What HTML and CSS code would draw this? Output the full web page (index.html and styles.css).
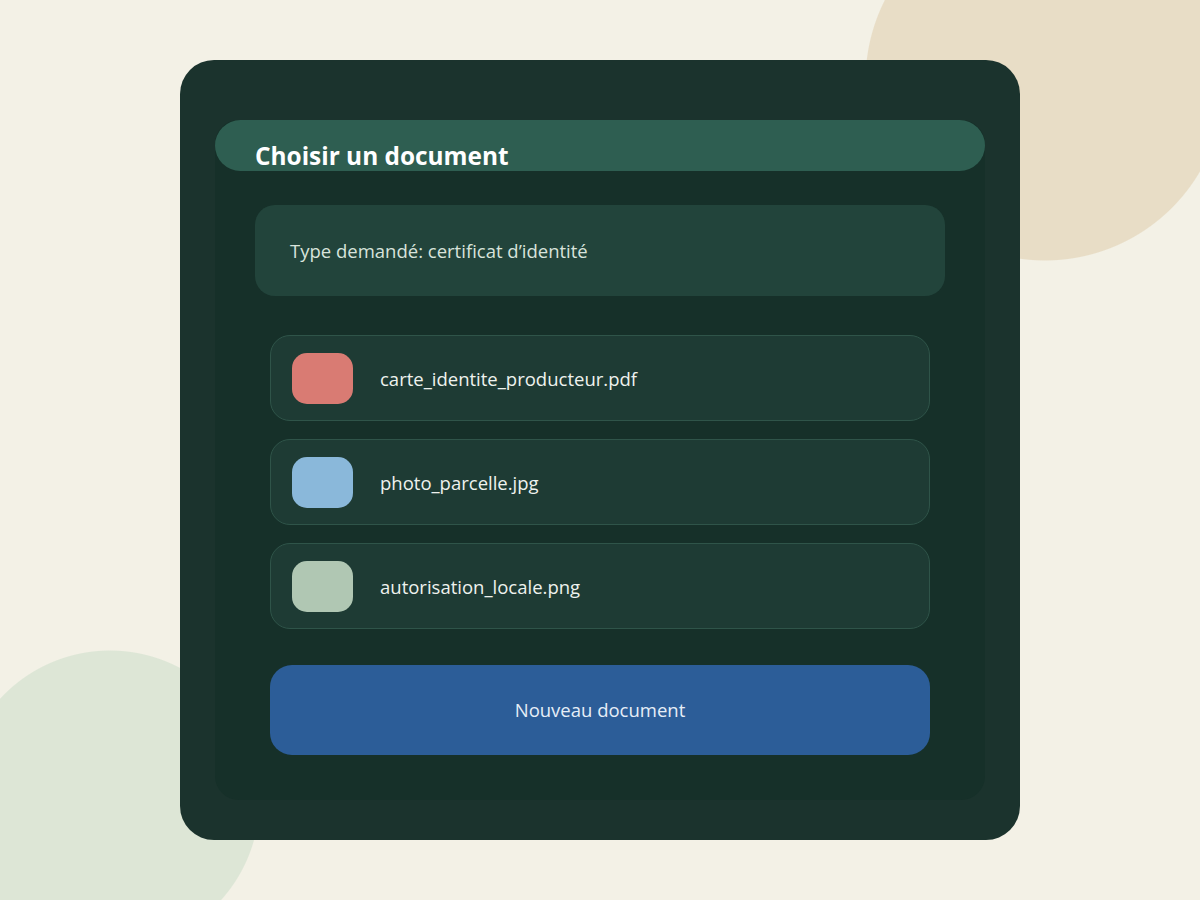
FILE: index.html
```html
<!DOCTYPE html>
<html lang="fr">
<head>
<meta charset="utf-8">
<title>Choisir un document</title>
<link rel="stylesheet" href="styles.css">
</head>
<body>
<main class="card">
  <section class="panel">
    <header class="panel-header">
      <h1 class="title">Choisir un document</h1>
    </header>
    <div class="panel-body">
      <div class="info">Type demandé: certificat d’identité</div>
      <ul class="files">
        <li class="file"><span class="swatch swatch-red"></span><span class="file-name">carte_identite_producteur.pdf</span></li>
        <li class="file"><span class="swatch swatch-blue"></span><span class="file-name">photo_parcelle.jpg</span></li>
        <li class="file"><span class="swatch swatch-sage"></span><span class="file-name">autorisation_locale.png</span></li>
      </ul>
      <div class="actions">
        <button class="new-btn" type="button">Nouveau document</button>
      </div>
    </div>
  </section>
</main>
</body>
</html>
```

FILE: styles.css
```css
* { box-sizing: border-box; }
html {
  margin: 0;
  padding: 0;
}
body {
  margin: 0;
  width: 1200px;
  height: 900px;
  background:
    radial-gradient(circle 180px at 1045px 81px, #e8ddc6 99.4%, rgba(232,221,198,0) 100%),
    radial-gradient(circle 150px at 110px 800px, #dde6d6 99.3%, rgba(221,230,214,0) 100%),
    #f3f1e6;
  background-repeat: no-repeat;
  font-family: "Open Sans", "Noto Sans", sans-serif;
  overflow: hidden;
  padding-top: 60px;
}
.card {
  width: 840px;
  height: 780px;
  margin: 0 auto;
  background: #1b332d;
  border-radius: 34px;
  padding: 60px 35px 40px;
}
.panel {
  background: #163029;
  border-radius: 24px;
  height: 680px;
  display: flex;
  flex-direction: column;
}
.panel-header {
  height: 51px;
  background: #2e5e51;
  border-radius: 26px;
  padding: 0 40px;
  display: flex;
  align-items: flex-end;
}
.title {
  margin: 0 0 -1px;
  font-size: 24.4px;
  font-weight: 700;
  color: #ffffff;
  line-height: 32px;
}
.panel-body {
  padding: 34px 40px 0;
}
.info {
  height: 91px;
  background: #22443b;
  border-radius: 20px;
  padding: 0 35px 1px;
  display: flex;
  align-items: center;
  color: #d8e3db;
  font-size: 18.5px;
}
.files {
  list-style: none;
  margin: 39px 0 0;
  padding: 0 15px;
  display: flex;
  flex-direction: column;
  gap: 18px;
}
.file {
  height: 86px;
  background: #1e3b34;
  border: 1px solid #2f5449;
  border-radius: 20px;
  padding: 0 21px;
  display: flex;
  align-items: center;
  gap: 27px;
}
.swatch {
  width: 61px;
  height: 51px;
  border-radius: 15px;
  flex: none;
}
.swatch-red { background: #d97b73; }
.swatch-blue { background: #8ab8da; }
.swatch-sage { background: #b0c7b3; }
.file-name {
  color: #eef2ee;
  font-size: 18.5px;
}
.actions { padding: 36px 15px 0; }
.new-btn {
  width: 100%;
  height: 90px;
  border: none;
  border-radius: 22px;
  background: #2c5d98;
  color: #e6eef7;
  font-family: inherit;
  font-size: 18.5px;
  padding-bottom: 2px;
}
```
